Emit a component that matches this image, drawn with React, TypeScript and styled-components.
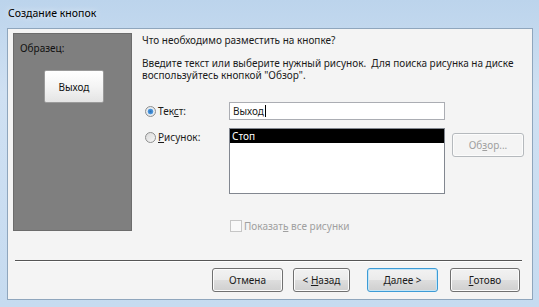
import styled, { createGlobalStyle } from 'styled-components';

const GlobalStyle = createGlobalStyle`
  html, body {
    margin: 0;
    padding: 0;
    background: #ffffff;
  }
  body {
    font-family: 'Noto Sans', 'Open Sans', sans-serif;
    font-size: 10px;
    color: #1b1b1b;
  }
`;

// окно мастера
const Window = styled.div`
  width: 539px;
  height: 307px;
  display: flex;
  flex-direction: column;
  background: linear-gradient(180deg, #bcd4ec 0%, #cfe0f2 30%, #c6dbf0 100%);
  box-sizing: border-box;
  overflow: hidden;
`;

const TitleBar = styled.div`
  height: 28px;
  flex-shrink: 0;
  display: flex;
  align-items: center;
  padding: 0 0 2px 8px;
  box-sizing: border-box;
  font-size: 10.5px;
  color: #000;
  text-shadow: 0 0 6px rgba(255, 255, 255, 0.9);
`;

const Client = styled.div`
  flex: 1;
  margin: 0 6px 7px 7px;
  background: #f4f4f4;
  border: 1px solid #8fa6bd;
  display: flex;
  flex-direction: column;
`;

const Body = styled.div`
  display: flex;
  padding: 4px 0 0 5px;
`;

const SamplePanel = styled.div`
  width: 119px;
  height: 198px;
  flex-shrink: 0;
  box-sizing: border-box;
  background: #7f7f7f;
  border: 1px solid #6c6c6c;
  padding: 7px 0 0 6px;
  display: flex;
  flex-direction: column;
`;

const SampleLabel = styled.div`
  color: #111;
  line-height: 14px;
`;

const SampleButton = styled.div`
  align-self: flex-start;
  margin: 15px 0 0 24px;
  width: 60px;
  height: 33px;
  box-sizing: border-box;
  display: flex;
  align-items: center;
  justify-content: center;
  background: linear-gradient(180deg, #ffffff 0%, #f4f4f4 50%, #e4e4e4 100%);
  border: 1px solid #9a9a9a;
  border-radius: 2px;
  color: #111;
`;

const Content = styled.div`
  flex: 1;
  min-width: 0;
  margin-left: 10px;
  display: flex;
  flex-direction: column;
`;

const Question = styled.div`
  line-height: 14px;
`;

const Hint = styled.div`
  margin-top: 10px;
  line-height: 12px;
  white-space: pre;
`;

const Options = styled.div`
  margin-top: 21px;
  display: grid;
  grid-template-columns: 80px 216px 72px;
  column-gap: 7px;
  row-gap: 8px;
  align-items: start;
`;

const RadioLabel = styled.label`
  display: flex;
  align-items: center;
  gap: 2px;
  margin-left: 3px;
  height: 18px;
`;

const RadioDot = styled.span<{ $checked?: boolean }>`
  width: 11px;
  height: 11px;
  border-radius: 50%;
  box-sizing: border-box;
  border: 1px solid #8e8f8f;
  background: ${(p) =>
    p.$checked
      ? 'radial-gradient(circle, #2b6fb6 0, #4f9ae0 2.5px, #e9eef3 3.2px, #dcdcdc 100%)'
      : 'linear-gradient(135deg, #d9d9d9, #f7f7f7)'};
`;

const TextInput = styled.div`
  height: 18px;
  box-sizing: border-box;
  border: 1px solid #abadb3;
  background: #fff;
  padding: 0 3px;
  display: flex;
  align-items: center;
`;

const Caret = styled.span`
  display: inline-block;
  width: 1px;
  height: 12px;
  background: #000;
  margin-left: 1px;
`;

const ListBox = styled.div`
  height: 66px;
  box-sizing: border-box;
  border: 1px solid #828790;
  background: #fff;
`;

const ListItem = styled.div<{ $selected?: boolean }>`
  height: 14px;
  line-height: 14px;
  padding: 0 2px;
  background: ${(p) => (p.$selected ? '#000' : 'transparent')};
  color: ${(p) => (p.$selected ? '#fff' : '#111')};
`;

const Button = styled.div<{ $w: number; $default?: boolean; $disabled?: boolean }>`
  width: ${(p) => p.$w}px;
  height: 24px;
  box-sizing: border-box;
  display: flex;
  align-items: center;
  justify-content: center;
  border-radius: 3px;
  border: 1px solid ${(p) => (p.$default ? '#3c9bd6' : p.$disabled ? '#b5b9bd' : '#707070')};
  background: ${(p) =>
    p.$disabled
      ? '#f4f4f4'
      : 'linear-gradient(180deg, #f2f2f2 0%, #ebebeb 48%, #dddddd 52%, #cfcfcf 100%)'};
  box-shadow: ${(p) => (p.$default ? 'inset 0 0 0 1px #c4e5f6' : 'inset 0 0 0 1px #fcfcfc')};
  color: ${(p) => (p.$disabled ? '#a0a0a0' : '#1b1b1b')};
`;

const BrowseButton = styled(Button)`
  margin-top: 5px;
`;

const CheckRow = styled.label`
  grid-column: 2 / 4;
  margin-top: 17px;
  display: flex;
  align-items: center;
  gap: 2px;
  color: #a0a0a0;
  margin-left: 1px;
`;

const CheckBox = styled.span`
  width: 12px;
  height: 12px;
  box-sizing: border-box;
  border: 1px solid #c6c6c6;
  background: #f9f9f9;
`;

const Separator = styled.div`
  margin: 27px 10px 0 7px;
  height: 1px;
  background: #555;
  border-bottom: 1px solid #fff;
`;

const ButtonRow = styled.div`
  display: flex;
  justify-content: flex-end;
  padding: 6px 12px 0 0;
`;

const Gap = styled.div<{ $w: number }>`
  width: ${(p) => p.$w}px;
  flex-shrink: 0;
`;

const U = styled.span`
  text-decoration: underline;
`;

export default function App() {
  return (
    <>
      <GlobalStyle />
      <Window>
        <TitleBar>Создание кнопок</TitleBar>
        <Client>
          <Body>
            <SamplePanel>
              <SampleLabel>Образец:</SampleLabel>
              <SampleButton>Выход</SampleButton>
            </SamplePanel>
            <Content>
              <Question>Что необходимо разместить на кнопке?</Question>
              <Hint>
                {'Введите текст или выберите нужный рисунок.  Для поиска рисунка на диске\nвоспользуйтесь кнопкой "Обзор".'}
              </Hint>
              <Options>
                <RadioLabel>
                  <RadioDot $checked />
                  <span>
                    Тек<U>с</U>т:
                  </span>
                </RadioLabel>
                <TextInput>
                  Выход
                  <Caret />
                </TextInput>
                <div />
                <RadioLabel>
                  <RadioDot />
                  <span>
                    <U>Р</U>исунок:
                  </span>
                </RadioLabel>
                <ListBox>
                  <ListItem $selected>Стоп</ListItem>
                </ListBox>
                <BrowseButton $w={72} $disabled>
                  <span>
                    Об<U>з</U>ор...
                  </span>
                </BrowseButton>
                <div />
                <CheckRow>
                  <CheckBox />
                  <span>
                    Показат<U>ь</U> все рисунки
                  </span>
                </CheckRow>
              </Options>
            </Content>
          </Body>
          <Separator />
          <ButtonRow>
            <Button $w={71}>Отмена</Button>
            <Gap $w={10} />
            <Button $w={57}>
              <span>
                &lt; <U>Н</U>азад
              </span>
            </Button>
            <Gap $w={17} />
            <Button $w={71} $default>
              <span>
                <U>Д</U>алее &gt;
              </span>
            </Button>
            <Gap $w={12} />
            <Button $w={70}>
              <span>
                <U>Г</U>отово
              </span>
            </Button>
          </ButtonRow>
        </Client>
      </Window>
    </>
  );
}
